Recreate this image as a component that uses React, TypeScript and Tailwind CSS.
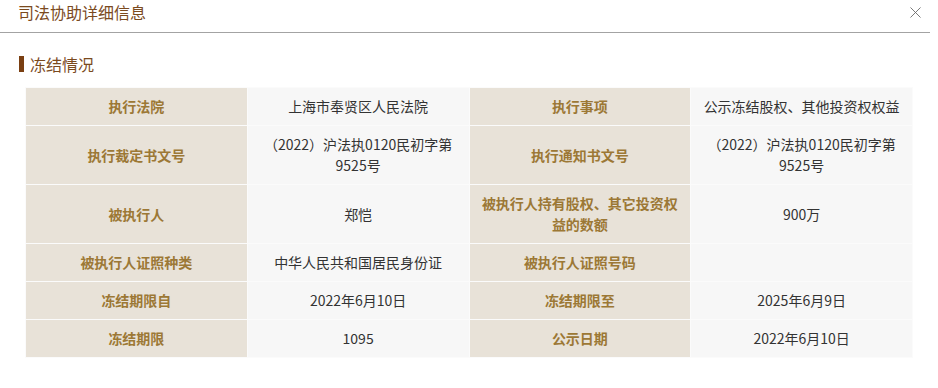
import { X } from 'lucide-react';

const rows: [string, string, string, string][] = [
  ['执行法院', '上海市奉贤区人民法院', '执行事项', '公示冻结股权、其他投资权权益'],
  ['执行裁定书文号', '（2022）沪法执0120民初字第9525号', '执行通知书文号', '（2022）沪法执0120民初字第9525号'],
  ['被执行人', '郑恺', '被执行人持有股权、其它投资权益的数额', '900万'],
  ['被执行人证照种类', '中华人民共和国居民身份证', '被执行人证照号码', ''],
  ['冻结期限自', '2022年6月10日', '冻结期限至', '2025年6月9日'],
  ['冻结期限', '1095', '公示日期', '2022年6月10日'],
];

export default function App() {
  return (
    <div
      className="w-[938px] h-[388px] bg-white overflow-hidden"
      style={{ fontFamily: '"Noto Sans CJK SC", "Open Sans", sans-serif' }}
    >
      <div className="flex items-center justify-between h-[33px] mr-[8px] border-b border-[#a3a3a3] pl-[18px] pr-[5px]">
        <span className="text-[16px] leading-[24px] text-[#7b4a1e] -mt-[9px]">司法协助详细信息</span>
        <X className="w-[19px] h-[19px] text-[#666] -mt-[7px]" strokeWidth={1.1} />
      </div>

      <div className="flex items-center mt-[21px] ml-[19px] h-[20px]">
        <span className="w-[5px] h-[16px] bg-[#7a3f12]" />
        <span className="ml-[6px] text-[16px] leading-[20px] text-[#7b4a1e]">冻结情况</span>
      </div>

      <table className="mt-[13px] ml-[25px] w-[888px] table-fixed border-collapse text-[14px] leading-[21px]">
        <tbody>
          {rows.map((r, i) => (
            <tr key={i}>
              {r.map((c, j) => (
                <td
                  key={j}
                  className={
                    j % 2 === 0
                      ? 'w-1/4 border border-[#fbfbfb] bg-[#e8e2d8] px-[10px] py-[8px] text-center font-bold text-[#9c7835]'
                      : 'w-1/4 border border-[#fbfbfb] bg-[#f7f7f7] px-[10px] py-[8px] text-center text-[#333]'
                  }
                >
                  {c}
                </td>
              ))}
            </tr>
          ))}
        </tbody>
      </table>
    </div>
  );
}
